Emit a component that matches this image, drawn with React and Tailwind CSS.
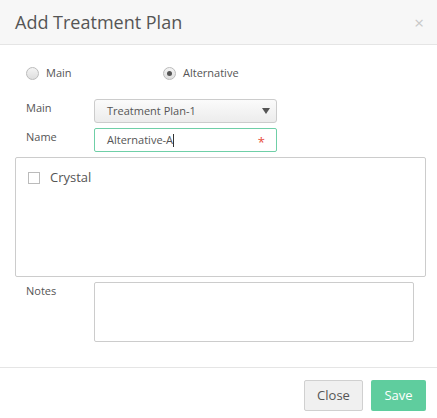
import React from "react";

export default function App() {
  return (
    <div className="w-[437px] h-[418px] bg-white flex flex-col text-[#555]" style={{ fontFamily: '"Open Sans", sans-serif' }}>
      <div className="h-[45px] shrink-0 bg-[#f7f7f7] border-b border-[#e5e5e5] flex items-center justify-between pl-[15px] pr-[13px]">
        <span className="text-[18px] text-[#555] leading-none">Add Treatment Plan</span>
        <span className="text-[17px] text-[#c8c8c8] leading-none">×</span>
      </div>
      <div className="flex flex-col pl-[15px] pr-[11px] pt-[18px] pb-[25px] border-b border-[#e5e5e5]">
        <div className="flex items-center h-[20px] pl-[11px] text-[11px]">
          <div className="flex items-center w-[137px]">
            <span className="w-[13px] h-[13px] rounded-full border border-[#bbb] bg-gradient-to-b from-[#f4f4f4] to-[#dedede]"></span>
            <span className="ml-[7px]">Main</span>
          </div>
          <div className="flex items-center">
            <span className="w-[13px] h-[13px] rounded-full border border-[#bbb] bg-gradient-to-b from-[#f4f4f4] to-[#dedede] flex items-center justify-center">
              <span className="w-[5px] h-[5px] rounded-full bg-[#555]"></span>
            </span>
            <span className="ml-[7px]">Alternative</span>
          </div>
        </div>
        <div className="flex mt-[16px] text-[11px]">
          <div className="w-[79px] pl-[11px] pt-[1px]">Main</div>
          <div className="w-[183px] h-[24px] rounded-[3px] border border-[#ccc] bg-gradient-to-b from-[#fbfbfb] to-[#ececec] flex items-center justify-between pl-[12px] pr-[6px]">
            <span>Treatment Plan-1</span>
            <svg width="8" height="6" viewBox="0 0 8 6"><path d="M0 0 L8 0 L4 6 Z" fill="#555" /></svg>
          </div>
        </div>
        <div className="flex mt-[5px] text-[11px]">
          <div className="w-[79px] pl-[11px] pt-[1px]">Name</div>
          <div className="w-[183px] h-[24px] rounded-[2px] border border-[#6fcfa7] bg-white flex items-center justify-between pl-[12px] pr-[11px]">
            <span className="flex items-center">Alternative-A<span className="inline-block w-px h-[13px] bg-[#333]"></span></span>
            <span className="text-[#e74c3c] text-[13px] leading-none mt-[4px]">*</span>
          </div>
        </div>
        <div className="mt-[5px] w-[411px] h-[120px] border border-[#ccc] rounded-[2px] pt-[10px] pl-[12px]">
          <div className="flex items-center">
            <span className="w-[12px] h-[12px] border border-[#bbb] bg-white"></span>
            <span className="ml-[10px] text-[13px] text-[#555]">Crystal</span>
          </div>
        </div>
        <div className="flex mt-[5px] text-[11px]">
          <div className="w-[79px] pl-[11px] pt-[1px]">Notes</div>
          <div className="w-[320px] h-[60px] rounded-[2px] border border-[#ccc] bg-white"></div>
        </div>
      </div>
      <div className="flex justify-end gap-[8px] pt-[12px] pr-[11px]">
        <button className="w-[59px] h-[31px] rounded-[2px] border border-[#d0d0d0] bg-[#f0f0f0] text-[13px] text-[#555]">Close</button>
        <button className="w-[55px] h-[31px] rounded-[2px] bg-[#5fcd9e] text-[13px] text-white">Save</button>
      </div>
    </div>
  );
}
